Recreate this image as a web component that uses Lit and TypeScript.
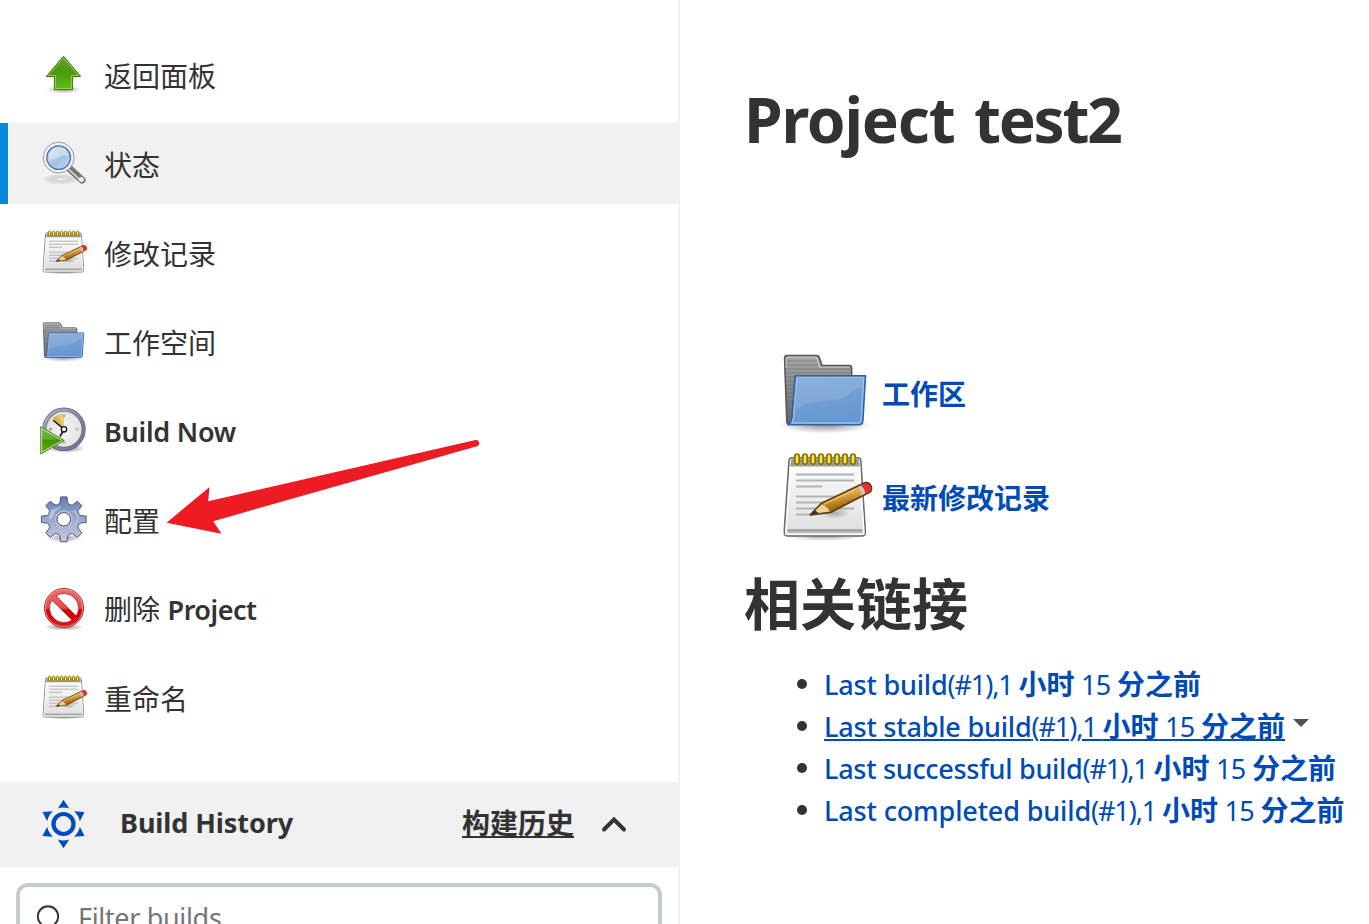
import { LitElement, html, css, svg, TemplateResult } from "lit";
import { customElement, property } from "lit/decorators.js";

/* Inline run of text whose tracking is adjusted so that it fills `w` pixels. */
@customElement("fit-text")
export class FitText extends LitElement {
  static styles = css`
    :host { display: inline; white-space: pre; font-size: 0.965em; }
  `;
  @property({ type: Number }) w = 0;
  @property() text = "";
  render() {
    return html`${this.text}`;
  }
  firstUpdated() {
    const range = document.createRange();
    range.selectNodeContents(this.renderRoot as unknown as Node);
    const natural = range.getBoundingClientRect().width;
    if (natural > 0) {
      this.style.letterSpacing = `${(this.w - natural) / this.text.length}px`;
    }
  }
}

const fit = (text: string, w: number) => html`<fit-text .text=${text} .w=${w}></fit-text>`;

const arrowUp = svg`
  <defs>
    <linearGradient id="g" x1="0" y1="0" x2="0" y2="1"><stop offset="0" stop-color="#5fa52a"/><stop offset=".5" stop-color="#4a9a0c"/><stop offset="1" stop-color="#63c011"/></linearGradient>
    <radialGradient id="s"><stop offset="0" stop-color="#000" stop-opacity=".4"/><stop offset="1" stop-color="#000" stop-opacity="0"/></radialGradient>
  </defs>
  <ellipse cx="23.5" cy="39.5" rx="18" ry="4" fill="url(#s)"/>
  <path d="M23.5 6.2 40.7 26.5H32.6V39.6H14.4V26.5H6.3Z" fill="url(#g)" stroke="#3a7304" stroke-width="1" stroke-linejoin="round"/>
  <path d="M23.5 7.8 38.6 25.5H31.6V38.6H15.4V25.5H8.4Z" fill="none" stroke="#b6e08e" stroke-width=".8" opacity=".8"/>`;

const magnifier = svg`
  <defs>
    <radialGradient id="s"><stop offset="0" stop-color="#fff" stop-opacity=".9"/><stop offset=".35" stop-color="#bbb" stop-opacity=".5"/><stop offset="1" stop-color="#888" stop-opacity="0"/></radialGradient>
    <linearGradient id="l" x1="0" y1="0" x2="1" y2="1"><stop offset="0" stop-color="#d3e1f1"/><stop offset=".55" stop-color="#a5c0e0"/><stop offset="1" stop-color="#c6d9ee"/></linearGradient>
  </defs>
  <ellipse cx="21" cy="40.2" rx="19.5" ry="5.3" fill="url(#s)"/>
  <path d="M29.2 29.2 42 41" stroke="#5c5c5c" stroke-width="7" stroke-linecap="round"/>
  <path d="M29.2 29.2 41.8 40.8" stroke="#9a9a9a" stroke-width="5.2" stroke-linecap="round"/>
  <path d="M30 28.2 42 39.5" stroke="#636363" stroke-width="1.3"/>
  <path d="M28.4 30.2 40 41" stroke="#d0d0d0" stroke-width="1.4"/>
  <circle cx="41.4" cy="40.6" r="2.5" fill="#eee"/>
  <circle cx="18.7" cy="18.6" r="15.4" fill="#f4f4f4" stroke="#7d7d7d" stroke-width=".8"/>
  <circle cx="18.7" cy="18.6" r="11.8" fill="url(#l)" stroke="#3f6db0" stroke-width="1.3"/>
  <path d="M9 20.5C8 13 13 8.3 19 8.3c5.5 0 9 3.5 9.7 8.3C23 14 18 21.5 9 20.5Z" fill="#fff" opacity=".38"/>`;

const notepad = svg`
  <defs>
    <linearGradient id="p" x1="0" y1="0" x2="0" y2="1"><stop offset="0" stop-color="#fff"/><stop offset="1" stop-color="#dedede"/></linearGradient>
    <radialGradient id="s"><stop offset="0" stop-color="#000" stop-opacity=".45"/><stop offset="1" stop-color="#000" stop-opacity="0"/></radialGradient>
    <linearGradient id="w" x1="0" y1="0" x2=".4" y2="1"><stop offset=".2" stop-color="#d99a2e"/><stop offset=".5" stop-color="#e0aa4c"/><stop offset=".8" stop-color="#a86a10"/></linearGradient>
  </defs>
  <ellipse cx="23.5" cy="43.5" rx="20" ry="3" fill="url(#s)"/>
  <path d="M7 4.9H39.8Q41.3 4.9 41.4 6.4L43.6 40.5V42.5Q43.6 44 42 44H4.8Q3.2 44 3.2 42.5V40.5L5.5 6.4Q5.6 4.9 7 4.9Z" fill="url(#p)" stroke="#6c6c6c" stroke-width=".8"/>
  <path d="M6.7 5.4H40.3L40.9 9.3H6Z" fill="#9b9b97"/>
  <path d="M6.3 9.3 4 41V43.2H42.9V41L40.7 9.3" fill="none" stroke="#fff" stroke-width=".7"/>
  <path d="M4.8 40.5H42.2V42.3H4.8Z" fill="#a8a8a8"/>
  <path d="M9 13.2H38M9 16.2H38M9 19.2H22M9 24.2H32M9 27.2H28M9 30.2H38M9 33.2H18" stroke="#b3b3b1" stroke-width="1"/>
  ${[9.5, 13.5, 17.5, 21.5, 25.5, 29.5, 33.5, 37.5].map(
    (x) => svg`<rect x=${x - 1.1} y="3.1" width="2.2" height="5" rx="1.1" fill="#fbe74a" stroke="#8d7600" stroke-width=".9"/>`
  )}
  <ellipse cx="28" cy="32.5" rx="8" ry="3" fill="url(#s)" opacity=".6"/>
  <path d="M16.2 33.4 21.8 27.6 43.3 17.4Q46 17.1 46.7 19.6 46.9 21.3 46 22L26.2 32.2Z" fill="url(#w)" stroke="#5b3f0d" stroke-width=".9" stroke-linejoin="round"/>
  <path d="M16.8 33 21.9 28.2Q24 28.8 24.3 29.8 25.7 30.6 25.9 31.8Z" fill="#eed297"/>
  <path d="M16.4 33.3 18.6 31.2 20.2 32.5Z" fill="#222"/>
  <path d="M40.4 19.3 43.3 17.9Q45.7 17.6 46.2 19.7 46.4 21 45.7 21.6L43 23Q43 20 40.4 19.3Z" fill="#ee2c35"/>
  <path d="M39.6 19.6 41.4 18.8Q43.6 20.5 43.5 22.8L41.5 23.8Q42 21 39.6 19.6Z" fill="#c9c9c9"/>
  <path d="M23 28 39.5 20.3" stroke="#f4ce86" stroke-width=".8" opacity=".7"/>`;

const folder = svg`
  <defs>
    <linearGradient id="b" x1="0" y1="0" x2="0" y2="1"><stop offset="0" stop-color="#a6a6a6"/><stop offset="1" stop-color="#686868"/></linearGradient>
    <linearGradient id="f" x1="0" y1="0" x2=".2" y2="1"><stop offset="0" stop-color="#80a8d5"/><stop offset="1" stop-color="#6597d2"/></linearGradient>
    <radialGradient id="s"><stop offset="0" stop-color="#000" stop-opacity=".45"/><stop offset="1" stop-color="#000" stop-opacity="0"/></radialGradient>
    <pattern id="t" width="4" height="2" patternUnits="userSpaceOnUse"><path d="M0 .5H4" stroke="#555" stroke-width=".7" opacity=".3"/></pattern>
  </defs>
  <ellipse cx="23.5" cy="40.3" rx="23" ry="4.5" fill="url(#s)"/>
  <path d="M3.3 7Q3.3 5.8 4.5 5.8H19.3Q20.4 5.8 20.7 6.9L22 10.8H35.6Q36.8 10.8 36.8 12V40H5.5Q4.5 40 4.4 38.8Z" fill="url(#b)" stroke="#555" stroke-width=".8"/>
  <path d="M4.2 7H20V12H36V38H4.8Z" fill="url(#t)"/>
  <path d="M4.1 12V7.2Q4.1 6.6 4.7 6.6H19.2L20.9 11.6H35.9" fill="none" stroke="#c4c4c4" stroke-width=".6"/>
  <path d="M8.6 15.9H43.7L42.4 38.2Q42.2 40.3 40.5 40.3H5Q6.8 39.3 7 36.8Z" fill="url(#f)" stroke="#2f62a5" stroke-width=".9" stroke-linejoin="round"/>
  <path d="M9.4 16.7H42.9L41.6 37.9Q41.4 39.5 40.3 39.5H6.9Q7.7 38 7.8 36.7Z" fill="none" stroke="#9fc0e6" stroke-width=".7"/>
  <path d="M9.7 17.1H42.4L41.9 22C38 20.5 36 27.7 28 28 20 28.2 14 29.5 8.9 33Z" fill="#fff" opacity=".11"/>`;

const clock = svg`
  <defs>
    <linearGradient id="r" x1="0" y1="0" x2="1" y2="1"><stop offset="0" stop-color="#b4b4cd"/><stop offset=".5" stop-color="#86869f"/><stop offset="1" stop-color="#707095"/></linearGradient>
    <radialGradient id="c"><stop offset="0" stop-color="#f6f6f4"/><stop offset=".8" stop-color="#e6e6e2"/><stop offset="1" stop-color="#d0d0cb"/></radialGradient>
    <linearGradient id="g" x1="0" y1="0" x2="0" y2="1"><stop offset="0" stop-color="#61b624"/><stop offset=".5" stop-color="#449406"/><stop offset="1" stop-color="#5bb313"/></linearGradient>
    <radialGradient id="s"><stop offset="0" stop-color="#000" stop-opacity=".5"/><stop offset="1" stop-color="#000" stop-opacity="0"/></radialGradient>
  </defs>
  <ellipse cx="26" cy="42.5" rx="19" ry="4.5" fill="url(#s)"/>
  <circle cx="24" cy="23.3" r="19.7" fill="url(#c)" stroke="#5e5e80" stroke-width="4"/>
  <circle cx="24" cy="23.3" r="19.7" fill="none" stroke="url(#r)" stroke-width="2.6"/>
  <path d="M24 23.3 12.5 12.5Q17.5 8 24 8Z" fill="#dcb74b"/>
  <path d="M24 23.3V8Q20 8 17.5 9.2Z" fill="#e6cb78"/>
  <circle cx="24" cy="9.7" r="1.7" fill="#b9b9b4"/><circle cx="37" cy="23.3" r="1.7" fill="#c3c3bf"/><circle cx="24" cy="36.5" r="1.7" fill="#c3c3bf"/><circle cx="10.5" cy="23.3" r="1.7" fill="#aaa"/>
  <path d="M22.5 22 13.2 14.2M23.5 24.5 19.8 30.5" stroke="#111" stroke-width="1.5"/>
  <circle cx="24" cy="23.3" r="2.7" fill="#fff" stroke="#111" stroke-width="1.3"/>
  <path d="M.8 20.7V48L24.2 34.6Z" fill="url(#g)" stroke="#3c7510" stroke-width=".9"/>
  <path d="M1.7 22.3V46.4L22.3 34.6Z" fill="none" stroke="#d4edc0" stroke-width=".9"/>
  <path d="M2.1 23V33Q10 35 19 33Z" fill="#fff" opacity=".15"/>`;

const toothAngles = [0, 45, 90, 135, 180, 225, 270, 315];
const gearOutline = (() => {
  const at = (deg: number, r: number) => {
    const a = ((deg - 90) * Math.PI) / 180;
    return `${(23.8 + r * Math.cos(a)).toFixed(2)} ${(24.3 + r * Math.sin(a)).toFixed(2)}`;
  };
  return (
    toothAngles
      .map(
        (t, i) =>
          `${i ? "L" : "M"}${at(t - 17, 16.2)}Q${at(t - 13, 16.6)} ${at(t - 12, 18)}L${at(t - 8, 22.6)}L${at(t + 8, 22.6)}L${at(t + 12, 18)}Q${at(t + 13, 16.6)} ${at(t + 17, 16.2)}Q${at(t + 22.5, 15.8)} ${at(t + 28, 16.2)}`
      )
      .join("") + "Z"
  );
})();

const gear = svg`
  <defs>
    <linearGradient id="m" x1="0" y1="0" x2="0" y2="1"><stop offset="0" stop-color="#5f80b0"/><stop offset=".45" stop-color="#96a6cc"/><stop offset="1" stop-color="#d0c3e2"/></linearGradient>
    <radialGradient id="s"><stop offset="0" stop-color="#000" stop-opacity=".4"/><stop offset="1" stop-color="#000" stop-opacity="0"/></radialGradient>
  </defs>
  <ellipse cx="24" cy="43" rx="18" ry="4.5" fill="url(#s)"/>
  <path d=${gearOutline} fill="url(#m)" stroke="#4d5674" stroke-width="1" stroke-linejoin="round"/>
  <path d="M9 22 10.5 15 17 13 21 11C19 15 15 15 14 20 12 25 8 25 9 22Z" fill="#c4cfe4" opacity=".7"/>
  <path d="M29 17C36 16 38 22 36 26 33 31 31 33 27 34 33 34 38 29 39 22L36 15Z" fill="#c9d1e8" opacity=".5"/>
  <circle cx="23.8" cy="24.3" r="8.2" fill="none" stroke="#b7bfda" stroke-width="1.6"/>
  <circle cx="23.8" cy="24.3" r="6.7" fill="#fff" stroke="#4a5273" stroke-width="1"/>`;

const forbid = svg`
  <defs>
    <linearGradient id="d" gradientUnits="userSpaceOnUse" x1="0" y1="4" x2="0" y2="44"><stop offset="0" stop-color="#ee6f6f"/><stop offset=".5" stop-color="#e34a4a"/><stop offset=".56" stop-color="#cc0000"/><stop offset="1" stop-color="#e21a1a"/></linearGradient>
    <radialGradient id="s"><stop offset="0" stop-color="#000" stop-opacity=".5"/><stop offset="1" stop-color="#000" stop-opacity="0"/></radialGradient>
  </defs>
  <ellipse cx="24" cy="43" rx="20" ry="3.5" fill="url(#s)"/>
  <circle cx="24" cy="24" r="19.5" fill="url(#d)" stroke="#b01818" stroke-width=".9"/>
  <path d="M11.8 16A14.6 14.6 0 0 0 32 36.2ZM16 11.8 36.2 32A14.6 14.6 0 0 0 16 11.8Z" fill="#fff" stroke="#a82020" stroke-width=".8"/>
  <circle cx="24" cy="24" r="18.6" fill="none" stroke="#f6a5a5" stroke-width=".8"/>`;

const sun = svg`
  <circle cx="23.5" cy="24" r="10" fill="none" stroke="#004bbd" stroke-width="4.2"/>
  ${[0, 60, 120, 180, 240, 300].map(
    (a) => svg`<path transform="rotate(${a} 23.5 24)" d="M23.5-.2 29.2 8.4Q23.5 6.6 17.8 8.4Z" fill="#004bbd"/>`
  )}`;

@customElement("app-icon")
export class AppIcon extends LitElement {
  static styles = css`
    :host { display: block; flex: none; width: 48px; height: 48px; }
    :host([large]) { width: 96px; height: 96px; }
    svg { display: block; width: 100%; height: 100%; overflow: visible; fill: none; }
  `;
  @property({ attribute: false }) art: TemplateResult | unknown = null;
  render() {
    return html`<svg viewBox="0 0 48 48">${this.art}</svg>`;
  }
}

interface Task {
  icon: unknown;
  label: unknown;
  active?: boolean;
  latin?: boolean;
}

const tasks: Task[] = [
  { icon: arrowUp, label: "返回面板" },
  { icon: magnifier, label: "状态", active: true },
  { icon: notepad, label: "修改记录" },
  { icon: folder, label: "工作空间" },
  { icon: clock, label: fit("Build Now", 132), latin: true },
  { icon: gear, label: "配置" },
  { icon: forbid, label: html`删除${fit(" ", 7.5)}<b>${fit("Project", 89)}</b>` },
  { icon: notepad, label: "重命名" },
];

const builds = [
  { name: "Last build", width: 123.5 },
  { name: "Last stable build", width: 207.5, hover: true },
  { name: "Last successful build", width: 258.5 },
  { name: "Last completed build", width: 267 },
];

@customElement("app-root")
export class AppRoot extends LitElement {
  static styles = css`
    :host {
      display: block;
      position: relative;
      height: 924px;
      overflow: hidden;
      background: #fff;
      color: #333;
      font-family: "Noto Sans", "Noto Sans CJK SC", sans-serif;
      font-size: 28px;
      line-height: 42px;
    }
    .page { display: flex; height: 100%; }
    .side {
      box-sizing: border-box;
      flex: none;
      width: 680px;
      padding-top: 34px;
      border-right: 2px solid #f1f1f1;
    }
    .tasks { display: flex; flex-direction: column; gap: 8px; }
    .task {
      box-sizing: border-box;
      display: flex;
      align-items: center;
      gap: 16px;
      height: 81px;
      padding: 0 0 1px 40px;
    }
    .label { padding-top: 3px; font-weight: 400; }
    .label b { font-weight: 570; }
    .latin { font-weight: 570; }
    .active { padding-left: 32px; border-left: 8px solid #0787d7; background: #f1f1f1; }
    .history {
      box-sizing: border-box;
      display: flex;
      align-items: center;
      height: 85px;
      margin-top: 44px;
      padding: 0 51px 1px 40px;
      background: #f1f1f1;
      font-weight: 700;
    }
    .title { flex: 1; margin-left: 32px; padding-bottom: 4px; }
    .trend {
      padding-bottom: 3px;
      text-decoration: underline;
      text-decoration-thickness: 2px;
      text-underline-offset: 2px;
    }
    .chevron { width: 26px; height: 18px; margin-left: 27px; }
    .filter {
      box-sizing: border-box;
      display: flex;
      align-items: center;
      height: 72px;
      margin: 16px 16px 0;
      padding: 0 16px 5px;
      border: 4px solid #c3ccd1;
      border-radius: 12px;
      color: #757575;
    }
    .lens { width: 24px; height: 24px; margin-right: 18px; }
    .filter span { padding-top: 1px; }
    .main { flex: 1; padding: 78px 0 0 64px; white-space: nowrap; }
    h1 { margin: 0; font-size: 64.5px; line-height: 80px; font-weight: 700; }
    .links { display: flex; flex-direction: column; gap: 8px; margin: 185px 0 0 34px; }
    .link { display: flex; align-items: center; gap: 8px; color: #004bb5; font-weight: 700; }
    .link span { padding-top: 4px; }
    h2 {
      margin: 17px 0 0;
      font: 700 56px/80px "Noto Sans CJK SC", sans-serif;
    }
    ul { margin: 22px 0 0; padding: 0; list-style: none; }
    li { display: flex; align-items: center; height: 42px; padding-left: 53px; }
    .dot { width: 10px; height: 10px; margin-right: 17px; border-radius: 5px; background: #333; }
    .build { color: #004bb5; font-weight: 500; }
    .build b { font-weight: 700; }
    .build i { font-style: normal; font-weight: 420; }
    .hover {
      text-decoration: underline;
      text-decoration-thickness: 2px;
      text-underline-offset: 2px;
    }
    .caret { width: 16px; height: 8px; margin: -6px 0 0 8px; }
    .pointer { position: absolute; left: 160px; top: 430px; width: 330px; height: 110px; }
    svg { display: block; flex: none; }
  `;

  render() {
    return html`
      <div class="page">
        <div class="side">
          <div class="tasks">
            ${tasks.map(
              (t) => html`
                <div class="task ${t.active ? "active" : ""}">
                  <app-icon .art=${t.icon}></app-icon>
                  <span class="label ${t.latin ? "latin" : ""}">${t.label}</span>
                </div>
              `
            )}
          </div>
          <div class="history">
            <app-icon .art=${sun}></app-icon>
            <span class="title">${fit("Build History", 173)}</span>
            <span class="trend">构建历史</span>
            <svg class="chevron" viewBox="0 0 26 18">
              <path d="M3 14.5 13 4.5 23 14.5" fill="none" stroke="#333" stroke-width="4" stroke-linecap="round"/>
            </svg>
          </div>
          <div class="filter">
            <svg class="lens" viewBox="0 0 24 24">
              <circle cx="12" cy="11.5" r="10.2" fill="none" stroke="#333" stroke-width="1.9"/>
              <path d="M19 19 25 25" stroke="#333" stroke-width="2"/>
            </svg>
            <span>${fit("Filter builds", 143.5)}</span>
          </div>
        </div>
        <div class="main">
          <h1>${fit("Project", 210.5)}${fit(" ", 19.5)}${fit("test2", 146.5)}</h1>
          <div class="links">
            <div class="link"><app-icon large .art=${folder}></app-icon><span>工作区</span></div>
            <div class="link"><app-icon large .art=${notepad}></app-icon><span>最新修改记录</span></div>
          </div>
          <h2>相关链接</h2>
          <ul>
            ${builds.map(
              (b) => html`
                <li>
                  <span class="dot"></span>
                  <span class="build ${b.hover ? "hover" : ""}"
                    >${fit(b.name, b.width)}<i>${fit("(#1),1 ", 71)}</i><b>小时</b><i>${fit(" 15 ", 42.5)}</i><b>分之前</b></span
                  >
                  ${b.hover
                    ? html`<svg class="caret" viewBox="0 0 16 8"><path d="M0 0H16L8 8Z" fill="#4d545d"/></svg>`
                    : ""}
                </li>
              `
            )}
          </ul>
        </div>
      </div>
      <svg class="pointer" viewBox="160 430 330 110">
        <path d="M166.5 522.7 209.5 487 208.2 501.2 475.5 440A3.2 3.2 0 0 1 477 446.2L213.2 521.2 221.5 533.7Z" fill="#ed1c24"/>
      </svg>
    `;
  }
}
